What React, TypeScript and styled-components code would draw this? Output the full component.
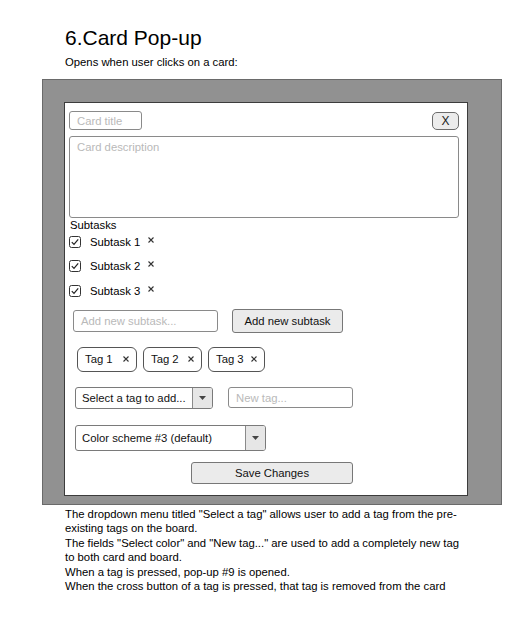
import React from "react";
import styled, { createGlobalStyle } from "styled-components";

const GlobalStyle = createGlobalStyle`
  html, body { margin: 0; padding: 0; background: #fff; }
  body {
    font-family: "Liberation Sans", Arial, sans-serif;
    color: #000;
  }
  * { box-sizing: border-box; }
`;

const Page = styled.div`
  padding: 26px 0 0 42px;
  width: 521px;
  height: 639px;
`;

const Heading = styled.h1`
  margin: 0 0 0 23px;
  font-size: 21px;
  line-height: 24px;
  font-weight: normal;
`;

const Subtitle = styled.p`
  margin: 6px 0 0 23px;
  font-size: 11.3px;
  line-height: 13px;
`;

const Overlay = styled.div`
  margin-top: 10px;
  width: 460px;
  height: 426px;
  background: #919191;
  border: 1px solid #6a6a6a;
  padding: 22px 0 0 21px;
`;

const Card = styled.div`
  width: 404px;
  height: 394px;
  background: #fff;
  border: 1px solid #3c3c3c;
  padding: 8px 8px 0 4px;
  display: flex;
  flex-direction: column;
  font-size: 11.3px;
`;

const TopRow = styled.div`
  display: flex;
  justify-content: space-between;
  align-items: flex-start;
`;

const TextInput = styled.div<{ $w: number; $h: number }>`
  width: ${(p) => p.$w}px;
  height: ${(p) => p.$h}px;
  border: 1px solid #8a8a8a;
  border-radius: 3px;
  background: #fff;
  color: #b9b9b9;
  padding: 0 7px;
  display: flex;
  align-items: center;
  white-space: nowrap;
`;

const TextArea = styled.div`
  margin-top: 6px;
  width: 390px;
  height: 82px;
  border: 1px solid #8a8a8a;
  border-radius: 3px;
  color: #b9b9b9;
  padding: 4px 7px;
  line-height: 13px;
`;

const CloseButton = styled.div`
  width: 27px;
  height: 18px;
  margin-top: 1px;
  border: 1px solid #6c6c6c;
  border-radius: 5px;
  background: #ececec;
  display: flex;
  align-items: center;
  justify-content: center;
  font-size: 12px;
  color: #222;
`;

const SectionLabel = styled.div`
  margin: 1px 0 0 1px;
  line-height: 13px;
`;

const SubtaskList = styled.div`
  margin-top: 4px;
  display: flex;
  flex-direction: column;
  gap: 12.3px;
`;

const SubtaskRow = styled.div`
  height: 12px;
  display: flex;
  align-items: center;
  line-height: 12px;
  white-space: nowrap;
`;

const SubtaskText = styled.span`
  margin-left: 9px;
`;

const Cross = styled.svg`
  display: block;
  flex: none;
`;

const SubtaskCross = styled(Cross)`
  margin-left: 8px;
  margin-top: -4px;
`;

const Row = styled.div<{ $mt: number; $ml: number; $gap?: number }>`
  display: flex;
  align-items: center;
  margin-top: ${(p) => p.$mt}px;
  margin-left: ${(p) => p.$ml}px;
  gap: ${(p) => p.$gap ?? 0}px;
`;

const Button = styled.div<{ $w: number; $h: number }>`
  width: ${(p) => p.$w}px;
  height: ${(p) => p.$h}px;
  border: 1px solid #777;
  border-radius: 3px;
  background: #ebebeb;
  display: flex;
  align-items: center;
  justify-content: center;
  color: #111;
  white-space: nowrap;
`;

const Tag = styled.div<{ $w: number }>`
  width: ${(p) => p.$w}px;
  height: 25px;
  border: 1px solid #555;
  border-radius: 6px;
  display: flex;
  align-items: center;
  justify-content: space-between;
  padding: 0 7px 0 7px;
  white-space: nowrap;
  color: #111;
`;

const Select = styled.div<{ $w: number; $h: number }>`
  width: ${(p) => p.$w}px;
  height: ${(p) => p.$h}px;
  border: 1px solid #7a7a7a;
  border-radius: 3px;
  display: flex;
  overflow: hidden;
  white-space: nowrap;
`;

const SelectValue = styled.div`
  flex: 1;
  display: flex;
  align-items: center;
  padding-left: 6px;
  color: #111;
`;

const SelectArrow = styled.div`
  width: 20px;
  flex: none;
  border-left: 1px solid #8a8a8a;
  background: #e6e6e6;
  display: flex;
  align-items: center;
  justify-content: center;
`;

const Notes = styled.div`
  margin: 1.6px 0 0 23px;
  font-size: 11.3px;
  line-height: 14.5px;
  white-space: nowrap;
`;

const Note = styled.p`
  margin: 0;
`;

const Checkbox = () => (
  <svg width="12" height="12" viewBox="0 0 12 12" style={{ display: "block", flex: "none" }}>
    <rect x="0.5" y="0.5" width="11" height="11" rx="2" fill="#fff" stroke="#333" />
    <path d="M2.8 6.1 L5 8.4 L9.2 3.3" fill="none" stroke="#222" strokeWidth="1.2" />
  </svg>
);

const CrossIcon = ({ as }: { as?: typeof SubtaskCross }) => {
  const C = as ?? Cross;
  return (
    <C width="6" height="6" viewBox="0 0 6 6">
      <path d="M0.5 0.5 L5.5 5.5 M5.5 0.5 L0.5 5.5" stroke="#333" strokeWidth="1.1" />
    </C>
  );
};

const Arrow = () => (
  <svg width="7" height="4" viewBox="0 0 7 4" style={{ display: "block" }}>
    <path d="M0 0 H7 L3.5 4 Z" fill="#444" />
  </svg>
);

const subtasks = ["Subtask 1", "Subtask 2", "Subtask 3"];
const tags = [
  { label: "Tag 1", w: 60 },
  { label: "Tag 2", w: 59 },
  { label: "Tag 3", w: 57 },
];

export default function App() {
  return (
    <>
      <GlobalStyle />
      <Page>
        <Heading>6.Card Pop-up</Heading>
        <Subtitle>Opens when user clicks on a card:</Subtitle>
        <Overlay>
          <Card>
            <TopRow>
              <TextInput $w={73} $h={19}>Card title</TextInput>
              <CloseButton>X</CloseButton>
            </TopRow>
            <TextArea>Card description</TextArea>
            <SectionLabel>Subtasks</SectionLabel>
            <SubtaskList>
              {subtasks.map((s) => (
                <SubtaskRow key={s}>
                  <Checkbox />
                  <SubtaskText>{s}</SubtaskText>
                  <CrossIcon as={SubtaskCross} />
                </SubtaskRow>
              ))}
            </SubtaskList>
            <Row $mt={12} $ml={4} $gap={14}>
              <TextInput $w={145} $h={22}>Add new subtask...</TextInput>
              <Button $w={111} $h={24}>Add new subtask</Button>
            </Row>
            <Row $mt={14} $ml={8} $gap={6}>
              {tags.map((t) => (
                <Tag key={t.label} $w={t.w}>
                  <span>{t.label}</span>
                  <CrossIcon />
                </Tag>
              ))}
            </Row>
            <Row $mt={15} $ml={6} $gap={15}>
              <Select $w={138} $h={22}>
                <SelectValue>Select a tag to add...</SelectValue>
                <SelectArrow>
                  <Arrow />
                </SelectArrow>
              </Select>
              <TextInput $w={125} $h={21}>New tag...</TextInput>
            </Row>
            <Row $mt={16} $ml={6}>
              <Select $w={191} $h={26}>
                <SelectValue>Color scheme #3 (default)</SelectValue>
                <SelectArrow>
                  <Arrow />
                </SelectArrow>
              </Select>
            </Row>
            <Row $mt={11} $ml={122}>
              <Button $w={162} $h={22}>Save Changes</Button>
            </Row>
          </Card>
        </Overlay>
        <Notes>
          <Note>
            The dropdown menu titled "Select a tag" allows user to add a tag from the pre-
            <br />
            existing tags on the board.
          </Note>
          <Note>
            The fields "Select color" and "New tag..." are used to add a completely new tag
            <br />
            to both card and board.
          </Note>
          <Note>When a tag is pressed, pop-up #9 is opened.</Note>
          <Note>When the cross button of a tag is pressed, that tag is removed from the card</Note>
        </Notes>
      </Page>
    </>
  );
}
